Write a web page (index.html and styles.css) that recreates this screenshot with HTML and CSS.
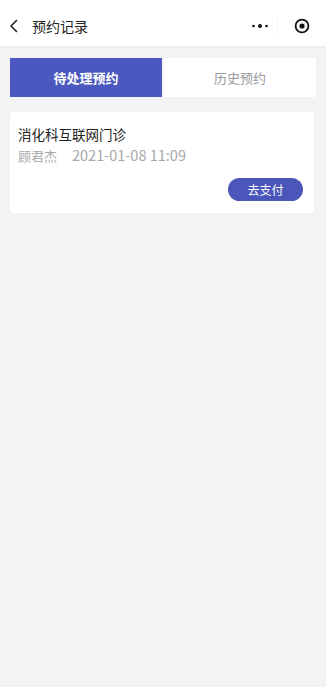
FILE: index.html
```html
<!DOCTYPE html>
<html lang="zh">
<head>
<meta charset="utf-8">
<title>预约记录</title>
<link rel="stylesheet" href="styles.css">
</head>
<body>
<div class="page">
  <header class="nav">
    <div class="nav-left">
      <svg class="back" width="10" height="14" viewBox="0 0 10 14"><path d="M7.5 1.5 L2 7 L7.5 12.5" fill="none" stroke="#222" stroke-width="1.6" stroke-linecap="round" stroke-linejoin="round"/></svg>
      <span class="nav-title">预约记录</span>
    </div>
    <div class="capsule">
      <svg class="more" width="18" height="6" viewBox="0 0 18 6"><circle cx="2.5" cy="3" r="1.3" fill="#111"/><circle cx="9" cy="3" r="2" fill="#111"/><circle cx="15.5" cy="3" r="1.3" fill="#111"/></svg>
      <span class="cap-div"></span>
      <svg class="target" width="16" height="16" viewBox="0 0 16 16"><circle cx="8" cy="8" r="6.4" fill="none" stroke="#111" stroke-width="1.8"/><circle cx="8" cy="8" r="2.6" fill="#111"/></svg>
    </div>
  </header>
  <main class="content">
    <div class="tabs">
      <div class="tab tab-active">待处理预约</div>
      <div class="tab">历史预约</div>
    </div>
    <div class="card">
      <div class="card-title">消化科互联网门诊</div>
      <div class="card-meta"><span class="name">顾君杰</span><span class="time">2021-01-08 11:09</span></div>
      <div class="card-actions"><button class="pay">去支付</button></div>
    </div>
  </main>
</div>
</body>
</html>
```
FILE: styles.css
```css
* { box-sizing: border-box; }
html, body { margin: 0; padding: 0; }
body {
  font-family: "Noto Sans CJK SC", "Noto Sans", sans-serif;
  background: #f3f2f5;
  width: 326px;
  height: 687px;
  overflow: hidden;
}
.page { min-height: 687px; background: #f3f2f5; }
.nav {
  height: 46px;
  background: #fff;
  display: flex;
  align-items: center;
  justify-content: space-between;
  padding: 0 16px 0 9px;
  box-shadow: 0 1px 2px rgba(0,0,0,0.03);
}
.nav-left { display: flex; align-items: center; gap: 13px; margin-top: 6px; }
.back { display: block; }
.nav-title { font-size: 14px; color: #222; line-height: 20px; }
.capsule { display: flex; align-items: center; margin-top: 6px; }
.more { display: block; margin-right: 8px; }
.cap-div { width: 1px; height: 18px; background: #f7f7f7; margin-right: 16px; }
.target { display: block; }
.content { padding: 12px 10px 0 10px; }
.tabs {
  display: flex;
  height: 39px;
  gap: 2px;
}
.tab {
  flex: 1;
  display: flex;
  align-items: center;
  justify-content: center;
  background: #fff;
  color: #9a9a9e;
  font-size: 13px;
}
.tab-active {
  background: #4a58bf;
  color: #fff;
  font-weight: 700;
}
.card {
  margin-top: 15px;
  background: #fff;
  border-radius: 4px;
  padding: 12px 12px 12px 8px;
  height: 101px;
  margin-right: 2px;
}
.card-title { font-size: 13.5px; color: #222; line-height: 20px; }
.card-meta {
  font-size: 13px;
  color: #a8a8ab;
  line-height: 20px;
  margin-top: 1px;
  display: flex;
  align-items: baseline;
  gap: 15px;
}
.time { font-size: 14.5px; }
.card-actions { display: flex; justify-content: flex-end; margin-top: 12px; }
.pay {
  width: 75px;
  height: 23px;
  border-radius: 12px;
  border: none;
  background: #4a56ba;
  color: #fff;
  font-family: inherit;
  font-size: 12px;
  padding: 0;
  margin-right: -1px;
}
```
